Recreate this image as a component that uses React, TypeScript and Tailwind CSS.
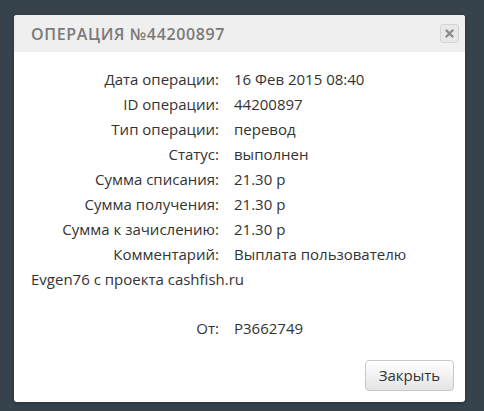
const rows: [string, string][] = [
  ["Дата операции:", "16 Фев 2015 08:40"],
  ["ID операции:", "44200897"],
  ["Тип операции:", "перевод"],
  ["Статус:", "выполнен"],
  ["Сумма списания:", "21.30 р"],
  ["Сумма получения:", "21.30 р"],
  ["Сумма к зачислению:", "21.30 р"],
  ["Комментарий:", "Выплата пользователю"],
];

function Row({ label, value }: { label: string; value: string }) {
  return (
    <div className="flex leading-[25px]">
      <span className="w-[188px] shrink-0 text-right">{label}</span>
      <span className="ml-[15px] whitespace-nowrap">{value}</span>
    </div>
  );
}

export default function App() {
  return (
    <div className="h-[411px] w-[484px] overflow-hidden bg-[#36434c] pt-[15px] pl-[14px] font-['Open_Sans',sans-serif]">
      <div className="w-[451px] overflow-hidden rounded-[3px] bg-white shadow-[0_1px_3px_rgba(0,0,0,0.3)]">
        <div className="flex h-[37px] items-center justify-between bg-[#efefef] pl-[17px] pr-[6px]">
          <h3 className="text-[16px] font-semibold tracking-[0.04em] text-[#7a7a7a]">
            ОПЕРАЦИЯ №44200897
          </h3>
          <button className="flex h-[19px] w-[19px] items-center justify-center rounded-[3px] border border-[#d4d4d4] bg-[#e8e8e8]">
            <svg width="9" height="9" viewBox="0 0 9 9">
              <path d="M1.5 1.5l6 6M7.5 1.5l-6 6" stroke="#8a8a8a" strokeWidth="2.4" strokeLinecap="round" />
            </svg>
          </button>
        </div>
        <div className="px-[17px] pt-[15px] text-[15px] text-[#333]">
          {rows.map(([l, v]) => (
            <Row key={l} label={l} value={v} />
          ))}
          <div className="leading-[25px]">Evgen76 с проекта cashfish.ru</div>
          <div className="h-[24px]" />
          <Row label="От:" value="P3662749" />
        </div>
        <div className="flex justify-end px-[11px] pt-[19px] pb-[11px]">
          <button className="h-[31px] w-[89px] rounded-[4px] border border-[#c8c8c8] bg-gradient-to-b from-white to-[#e4e4e4] text-[15px] text-[#333]">
            Закрыть
          </button>
        </div>
      </div>
    </div>
  );
}
